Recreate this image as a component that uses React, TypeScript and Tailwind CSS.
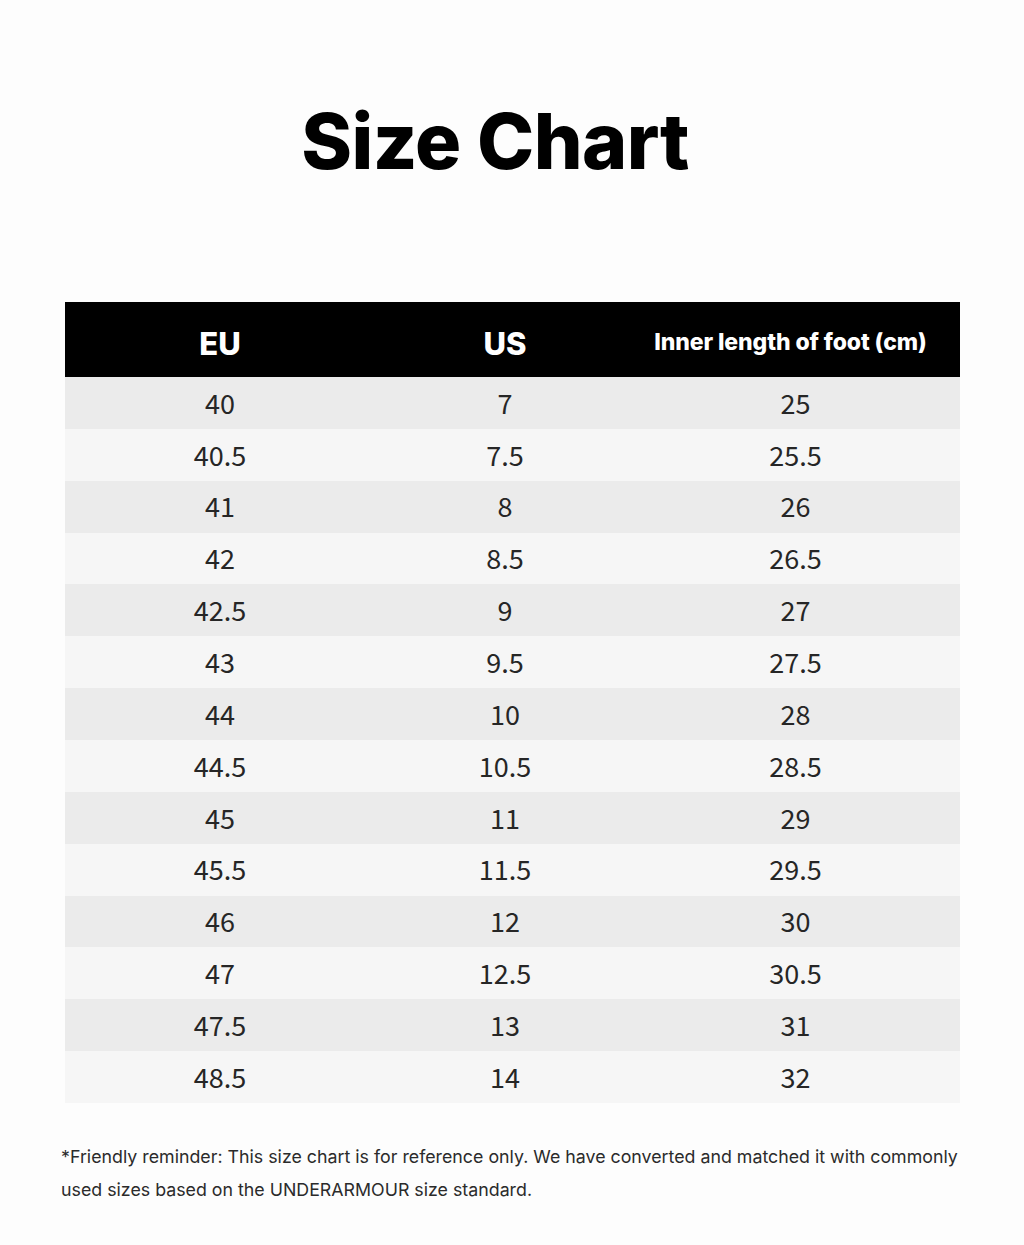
import React from 'react';

const rows: [string, string, string][] = [
  ['40', '7', '25'],
  ['40.5', '7.5', '25.5'],
  ['41', '8', '26'],
  ['42', '8.5', '26.5'],
  ['42.5', '9', '27'],
  ['43', '9.5', '27.5'],
  ['44', '10', '28'],
  ['44.5', '10.5', '28.5'],
  ['45', '11', '29'],
  ['45.5', '11.5', '29.5'],
  ['46', '12', '30'],
  ['47', '12.5', '30.5'],
  ['47.5', '13', '31'],
  ['48.5', '14', '32'],
];

const App: React.FC = () => {
  return (
    <div className="w-[1024px] h-[1245px] bg-[#fdfdfd] font-['Inter',sans-serif] text-black overflow-hidden">
      {/* Title */}
      <div className="h-[302px] pt-[103px] pr-[34px]">
        <h1 className="text-center text-[77px] font-extrabold leading-none tracking-[-0.6px]">Size Chart</h1>
      </div>

      {/* Table */}
      <div className="ml-[65px] w-[895px]">
        <div className="grid grid-cols-[310px_260px_325px] h-[75px] bg-black text-white items-center font-extrabold">
          <div className="text-center text-[31px] pt-[10px]">EU</div>
          <div className="text-center text-[31px] pt-[10px]">US</div>
          <div className="text-center text-[23px] pt-[6px] pr-[14px] tracking-[-0.1px]">Inner length of foot (cm)</div>
        </div>
        {rows.map((r, i) => (
          <div
            key={r[0]}
            className={`grid grid-cols-[310px_260px_325px] h-[51.86px] items-center text-[27px] text-[#262626] font-['Noto_Sans_CJK_SC','Noto_Sans',sans-serif] ${
              i % 2 === 0 ? 'bg-[#ebebeb]' : 'bg-[#f6f6f6]'
            }`}
          >
            <div className="text-center">{r[0]}</div>
            <div className="text-center">{r[1]}</div>
            <div className="text-center pr-[4px]">{r[2]}</div>
          </div>
        ))}
      </div>

      {/* Note */}
      <p className="mt-[37px] ml-[61px] w-[930px] text-[17.8px] leading-[33px] text-[#2b2b2b]">
        *Friendly reminder: This size chart is for reference only. We have converted and matched it with commonly
        <br />
        used sizes based on the UNDERARMOUR size standard.
      </p>
    </div>
  );
};

export default App;
